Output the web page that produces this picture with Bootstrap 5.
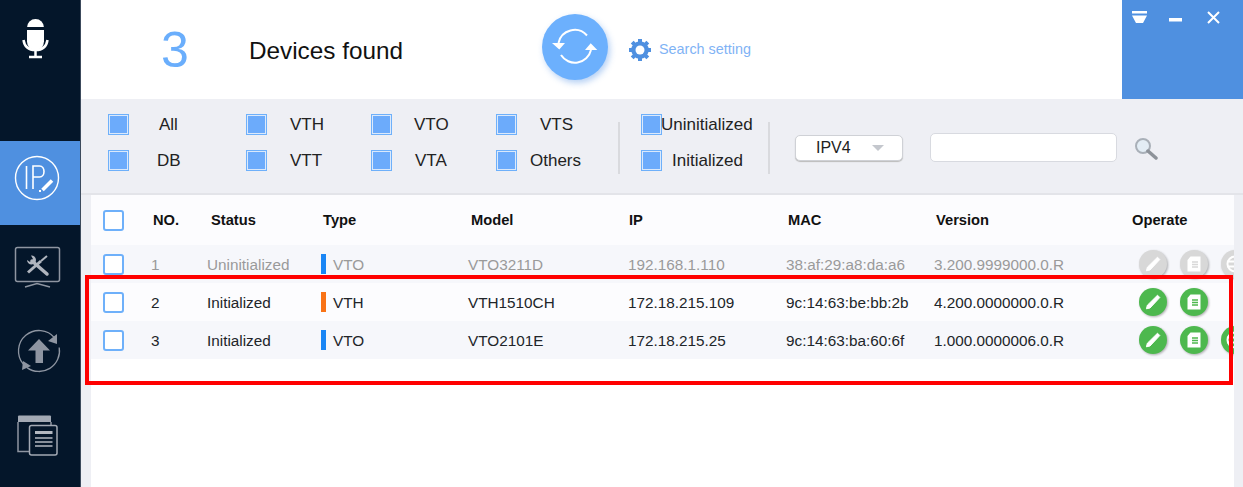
<!DOCTYPE html>
<html lang="en">
<head>
<meta charset="utf-8">
<title>Devices found</title>
<link href="https://cdn.jsdelivr.net/npm/bootstrap@5.3.0/dist/css/bootstrap.min.css" rel="stylesheet">
<style>
html,body{height:487px;overflow:hidden;margin:0}
body{font-family:"Liberation Sans",Arial,sans-serif;color:#222;background:#fff}
.shell{width:1243px;height:487px;position:relative}
.side{width:81px;background:#04162a;border-right:1px solid #3c4a5c;flex:none}
.side-top{height:141px;padding:17px 0 0 11px}
.side-item{height:84px;padding-left:11px;display:flex;align-items:center}
.side-item.on{background:#4f90e0;padding-bottom:10px}
.top{height:99px;background:#fff}
.num{width:88px;margin-left:80px;font-size:50px;line-height:1;color:#6aaefc}
.found{width:293px;font-size:24.3px;color:#111;padding-top:3px}
.sync{width:66px;height:66px;border-radius:50%;background:#6cb0fd;box-shadow:2px 3px 6px rgba(90,150,230,.45);margin-top:-5px;flex:none}
.gearbox{margin-left:20px;width:31px}
.sset{color:#7fb3f5;font-size:14.4px;width:463px}
.wctl{width:121px;height:99px;background:#4f90e0;padding:11px 0 0 10px;gap:22px;align-items:flex-start;flex:none}
.wx{margin-left:3px}
.fbar{height:96px;background:#eeeff4;border-bottom:2px solid #e3e4e9;padding-left:27px;font-size:17px;color:#222}
.fgrid{display:grid;grid-template-columns:138px 125px 125px 122px;grid-auto-rows:36px;padding-top:15px}
.fgrid2{display:grid;grid-template-columns:1fr;grid-auto-rows:36px;padding-top:15px;width:120px}
.fi{display:flex;align-items:center;height:21px}
.fi span{display:block;padding-top:1px}
.bx{width:21px;height:21px;border:1px solid #6eb0fa;background:#6cabfb;box-shadow:inset 0 0 0 1px #dbe9fb,inset 0 0 0 2px #6cabfb;flex:none}
.vsep{width:2px;height:52px;background:#d9dade;margin-top:23px}
.sep2{margin-left:7px}
.grp2{margin-left:21px}
.sel{width:108px;height:26px;background:#fff;border:1px solid #cfd1d6;border-radius:5px;margin:36px 0 0 25px;font-size:16px;padding-left:20px;line-height:24px;box-shadow:0 1px 1px #bbb}
.caret{width:0;height:0;border-left:6px solid transparent;border-right:6px solid transparent;border-top:6px solid #c4c7cd;margin:9px 0 0 21px}
.sbox{width:187px;height:29px;background:#fff;border:1px solid #d8dae0;border-radius:5px;margin:34px 0 0 27px}
.lens{margin:38px 0 0 17px}
.wrap{background:#eeeff4;height:292px;padding-left:10px;padding-right:9px}
.panel{background:#fff;height:100%;overflow:hidden}
.tbl{table-layout:fixed;border-collapse:collapse;width:1143px;margin:0;font-size:15.3px}
.tbl th{height:50px;padding:0;font-size:14.7px;font-weight:700;color:#111;vertical-align:middle;border:0;background:#fcfcfe}
.tbl td{height:38px;padding:0;vertical-align:middle;border:0;white-space:nowrap;overflow:visible}
.r-a td{background:#f6f7fb}
.r-b td{background:#fcfcfe}
.dim td{color:#9a9a9a}
.txt{display:block;padding-top:2px}
.ck{display:block;width:21px;height:21px;border:2px solid #6eb0fa;border-radius:3px;background:#fff;margin-left:12px}
.tbar{display:inline-block;width:5px;height:20px;vertical-align:-4px;margin-right:7px}
.p2{padding-left:2px!important}.p3{padding-left:3px!important}.p4{padding-left:4px!important}.p1{padding-left:1px!important}
.ops{display:flex;gap:13px;padding-left:7px}
.ops svg{flex:none;filter:drop-shadow(1px 1px 1px rgba(0,0,0,.3))}
.redbox{position:absolute;left:85px;top:275px;width:1148px;height:110px;border:4px solid #f00;pointer-events:none}
.defs{position:absolute}
</style>
</head>
<body>
<svg width="0" height="0" class="defs">
  <defs>
    <symbol id="pen" viewBox="0 0 28 28"><path d="M18.500 7.200 20.800 9.500 11 20 7.400 20.800 8.400 17.200Z" fill="#fff" stroke="#fff" stroke-linejoin="round"/></symbol>
    <symbol id="doc" viewBox="0 0 28 28"><path d="M10.500 6.500H20.500V21.500H7.500V10Z" fill="#fff"/><path d="M12 12h6M12 14.500h6M12 17h6" stroke="currentColor" stroke-width="1.400"/></symbol>
    <symbol id="glb" viewBox="0 0 28 28"><circle cx="14" cy="14" r="7.500" fill="none" stroke="#fff" stroke-width="2"/><path d="M6.500 11.500h15M6.500 16.500h15" stroke="#fff" stroke-width="2"/></symbol>
  </defs>
</svg>
<div class="shell d-flex">
  <aside class="side d-flex flex-column">
    <div class="side-top">
      <svg width="50" height="44" viewBox="11 17 50 44"><rect x="27" y="19" width="17" height="31" rx="8.500" fill="#fff"/><path d="M27 28.500h17" stroke="#04162a" stroke-width="3"/><path d="M23.500 40c1 7 6 10 12 10s11-3 12-10" fill="none" stroke="#fff" stroke-width="2.500"/><path d="M35.500 50v6M29 57h13" stroke="#fff" stroke-width="2.500"/></svg>
    </div>
    <div class="side-item on">
      <svg width="50" height="50" viewBox="11 153 50 50" fill="none" stroke="#fff"><circle cx="37" cy="178" r="21.500" stroke-width="1.400"/><path d="M26.500 166v23" stroke-width="1.600"/><path d="M33 189v-23h6.500c6 0 6 11 0 11H33" stroke-width="1.600"/><path d="M42.500 190 52 180.500" stroke-width="3.500"/><path d="M39 191h2" stroke-width="2"/></svg>
    </div>
    <div class="side-item">
      <svg width="50" height="44" viewBox="11 245 50 44" fill="none" stroke="#8e95a1"><rect x="15.500" y="247.500" width="44" height="34" rx="2" stroke-width="1.500"/><path d="M25 287 37 283.500 50 287" stroke-width="1.500"/><path d="M32 261 47 274" stroke="#b0b5be" stroke-width="3.500" stroke-linecap="round"/><path d="M31 255.500a4.500 4.500 0 1 1-4 4.500l3 2 3-3Z" fill="#b0b5be" stroke="none"/><path d="M28 272.500 41 261" stroke="#b0b5be" stroke-width="3"/><path d="M41 261 47 256" stroke="#b0b5be" stroke-width="2"/></svg>
    </div>
    <div class="side-item">
      <svg width="50" height="46" viewBox="11 327 50 46"><g fill="none" stroke="#8e95a1" stroke-width="1.300"><path d="M54.700 336.800A20.500 20.500 0 0 0 23.300 363.200"/><path d="M27 366.600A20.500 20.500 0 0 0 59.200 346.500"/></g><path d="M57 333V343L48 340ZM22 369 23 360 31 365Z" fill="#8e95a1"/><path d="M39 338 50 349.500H43V362H35.500V349.500H28Z" fill="#8e95a1"/></svg>
    </div>
    <div class="side-item">
      <svg width="50" height="46" viewBox="11 413 50 46"><path d="M18 417.500a1 1 0 0 1 1-1H50a1 1 0 0 1 1 1V423H18Z" fill="#a3a9b4"/><path d="M18 423v29.500h12M51 423v3" fill="none" stroke="#8e95a1" stroke-width="1.500"/><rect x="29.500" y="426.500" width="27.500" height="29.500" rx="2" fill="#04162a" stroke="#a3a9b4" stroke-width="1.500"/><path d="M35 433.500h17.500" stroke="#b3b8c1" stroke-width="3"/><path d="M35 439h17.500M35 443h17.500M35 447h17.500" stroke="#b3b8c1" stroke-width="1.400"/></svg>
    </div>
  </aside>
  <main class="flex-grow-1">
    <header class="top d-flex align-items-center">
      <div class="num">3</div>
      <div class="found">Devices found</div>
      <div class="sync">
        <svg width="66" height="66" viewBox="0 0 66 66" fill="none"><path d="M16.500 29A16.500 16.500 0 0 1 45 21.500" stroke="#fff" stroke-width="2"/><path d="M19 41A16.500 16.500 0 0 0 49 36" stroke="#fff" stroke-width="2"/><path d="M10 29H23L17.300 35.500ZM43 36H55.300L48.700 29.300Z" fill="#fff"/></svg>
      </div>
      <div class="gearbox d-flex align-items-center">
        <svg width="24" height="24" viewBox="0 0 24 24"><circle cx="12" cy="12" r="6.500" fill="none" stroke="#4f90e0" stroke-width="4.500"/><path d="M12 1v22M1 12h22M4.200 4.200l15.600 15.600M19.800 4.200 4.200 19.800" stroke="#4f90e0" stroke-width="4"/><circle cx="12" cy="12" r="4.500" fill="#fff"/></svg>
      </div>
      <div class="sset">Search setting</div>
      <div class="wctl d-flex">
        <svg width="15" height="13" viewBox="0 0 15 13" fill="#fff"><rect width="15" height="2.500"/><path d="M0 4.500H15L11 12H4Z"/></svg>
        <svg width="13" height="13" viewBox="0 0 13 13" fill="#fff"><rect y="7" width="13" height="3.500"/></svg>
        <svg class="wx" width="13" height="13" viewBox="0 0 13 13" stroke="#fff" stroke-width="2"><path d="M1 1 12 12M12 1 1 12"/></svg>
      </div>
    </header>
    <section class="fbar d-flex">
      <div class="fgrid">
        <div class="fi"><i class="bx"></i><span style="margin-left:30px">All</span></div>
        <div class="fi"><i class="bx"></i><span style="margin-left:23px">VTH</span></div>
        <div class="fi"><i class="bx"></i><span style="margin-left:22px">VTO</span></div>
        <div class="fi"><i class="bx"></i><span style="margin-left:23px">VTS</span></div>
        <div class="fi"><i class="bx"></i><span style="margin-left:28px">DB</span></div>
        <div class="fi"><i class="bx"></i><span style="margin-left:23px">VTT</span></div>
        <div class="fi"><i class="bx"></i><span style="margin-left:23px">VTA</span></div>
        <div class="fi"><i class="bx"></i><span style="margin-left:13px">Others</span></div>
      </div>
      <div class="vsep"></div>
      <div class="fgrid2 grp2">
        <div class="fi"><i class="bx"></i><span style="margin-left:-1px">Uninitialized</span></div>
        <div class="fi"><i class="bx"></i><span style="margin-left:10px">Initialized</span></div>
      </div>
      <div class="vsep sep2"></div>
      <div class="sel d-flex">IPV4<i class="caret"></i></div>
      <div class="sbox"></div>
      <svg class="lens" width="24" height="24" viewBox="0 0 24 24"><circle cx="9" cy="9" r="7" fill="#e3edf5" stroke="#a9b0b8" stroke-width="2"/><path d="M14 14 22 21" stroke="#8d9299" stroke-width="3.500" stroke-linecap="round"/></svg>
    </section>
    <section class="wrap">
      <div class="panel">
        <table class="table tbl">
          <colgroup><col style="width:60px"><col style="width:56px"><col style="width:114px"><col style="width:147px"><col style="width:160px"><col style="width:158px"><col style="width:148px"><col style="width:198px"><col style="width:102px"></colgroup>
          <thead><tr>
            <th><i class="ck"></i></th><th class="p2">NO.</th><th class="p4">Status</th><th class="p2">Type</th><th class="p3">Model</th><th class="p1">IP</th><th class="p2">MAC</th><th class="p2">Version</th><th>Operate</th>
          </tr></thead>
          <tbody>
            <tr class="r-a dim">
              <td><i class="ck"></i></td><td><span class="txt">1</span></td><td><span class="txt">Uninitialized</span></td><td><span class="txt"><i class="tbar" style="background:#1a86f5"></i>VTO</span></td><td><span class="txt">VTO3211D</span></td><td><span class="txt">192.168.1.110</span></td><td><span class="txt">38:af:29:a8:da:a6</span></td><td><span class="txt">3.200.9999000.0.R</span></td>
              <td><div class="ops" style="color:#d8d8d8">
                <svg width="28" height="28"><circle cx="14" cy="14" r="14" fill="#d8d8d8"/><use href="#pen" width="28" height="28"/></svg>
                <svg width="28" height="28"><circle cx="14" cy="14" r="14" fill="#d8d8d8"/><use href="#doc" width="28" height="28"/></svg>
                <svg width="28" height="28"><circle cx="14" cy="14" r="14" fill="#d8d8d8"/><use href="#glb" width="28" height="28"/></svg>
              </div></td>
            </tr>
            <tr class="r-b">
              <td><i class="ck"></i></td><td><span class="txt">2</span></td><td><span class="txt">Initialized</span></td><td><span class="txt"><i class="tbar" style="background:#f97316"></i>VTH</span></td><td><span class="txt">VTH1510CH</span></td><td><span class="txt">172.18.215.109</span></td><td><span class="txt">9c:14:63:be:bb:2b</span></td><td><span class="txt">4.200.0000000.0.R</span></td>
              <td><div class="ops" style="color:#4db84e">
                <svg width="28" height="28"><circle cx="14" cy="14" r="14" fill="#4db84e"/><use href="#pen" width="28" height="28"/></svg>
                <svg width="28" height="28"><circle cx="14" cy="14" r="14" fill="#4db84e"/><use href="#doc" width="28" height="28"/></svg>
              </div></td>
            </tr>
            <tr class="r-a">
              <td><i class="ck"></i></td><td><span class="txt">3</span></td><td><span class="txt">Initialized</span></td><td><span class="txt"><i class="tbar" style="background:#1a86f5"></i>VTO</span></td><td><span class="txt">VTO2101E</span></td><td><span class="txt">172.18.215.25</span></td><td><span class="txt">9c:14:63:ba:60:6f</span></td><td><span class="txt">1.000.0000006.0.R</span></td>
              <td><div class="ops" style="color:#4db84e">
                <svg width="28" height="28"><circle cx="14" cy="14" r="14" fill="#4db84e"/><use href="#pen" width="28" height="28"/></svg>
                <svg width="28" height="28"><circle cx="14" cy="14" r="14" fill="#4db84e"/><use href="#doc" width="28" height="28"/></svg>
                <svg width="28" height="28"><circle cx="14" cy="14" r="14" fill="#4db84e"/><use href="#glb" width="28" height="28"/></svg>
              </div></td>
            </tr>
          </tbody>
        </table>
      </div>
    </section>
  </main>
  <div class="redbox"></div>
</div>
<script src="https://cdn.jsdelivr.net/npm/bootstrap@5.3.0/dist/js/bootstrap.bundle.min.js"></script>
</body>
</html>
